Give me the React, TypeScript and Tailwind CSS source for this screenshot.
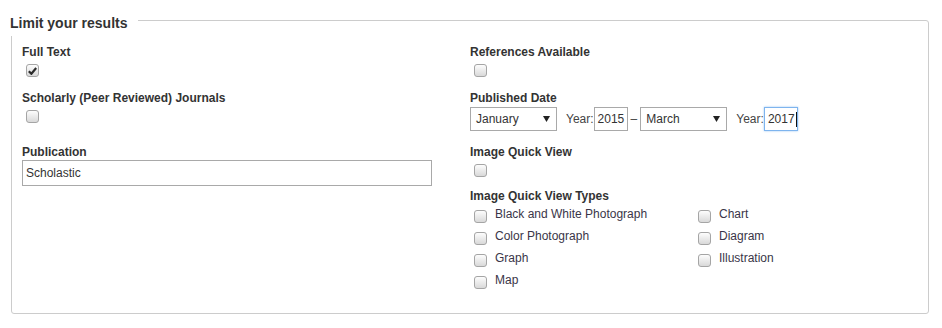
import React from 'react';

const imageTypes = [
  'Black and White Photograph',
  'Color Photograph',
  'Graph',
  'Map',
  'Chart',
  'Diagram',
  'Illustration',
];

function Checkbox({ checked = false, className = '' }: { checked?: boolean; className?: string }) {
  return (
    <span
      className={`flex h-[13px] w-[13px] shrink-0 items-center justify-center rounded-[3px] border border-[#a5a5a5] bg-linear-to-b from-[#fdfdfd] to-[#d9d9d9] ${className}`}
    >
      {checked && (
        <svg width="9" height="8" viewBox="0 0 9 8">
          <path d="M0.8 4.2 L3.4 6.8 L8.2 1" fill="none" stroke="#2b2b2b" strokeWidth="2.2" />
        </svg>
      )}
    </span>
  );
}

function FieldLabel({ children, className = '' }: { children: React.ReactNode; className?: string }) {
  return <div className={`text-[12px] font-bold leading-[17px] text-[#333] ${className}`}>{children}</div>;
}

function SelectBox({ value }: { value: string }) {
  return (
    <div className="flex h-[24px] w-[87px] items-center justify-between border border-[#a9a9a9] bg-white pl-[5px] pr-[6px] text-[12px] text-[#333]">
      <span>{value}</span>
      <svg width="7" height="6" viewBox="0 0 7 6">
        <polygon points="0,0 7,0 3.5,6" fill="#222" />
      </svg>
    </div>
  );
}

function YearBox({ value, focused = false }: { value: string; focused?: boolean }) {
  return (
    <div
      className={`flex h-[24px] w-[34px] items-center border pl-[3px] text-[12px] text-[#333] ${
        focused ? 'border-[#7eb4ee] shadow-[0_0_2px_#9cc6f3]' : 'border-[#a9a9a9]'
      }`}
    >
      <span>{value}</span>
      {focused && <span className="ml-[1px] h-[15px] w-px bg-[#111]" />}
    </div>
  );
}

export default function App() {
  return (
    <div className="h-[328px] w-[942px] bg-white pt-[4px] font-['Liberation_Sans',Arial,sans-serif] text-[#333]">
      <fieldset className="ml-[11px] w-[918px] rounded-[3px] border border-[#cccccc] p-0">
        <legend className="-ml-[2px] bg-white pt-[9px] pb-[3px] pr-[11px] text-[14px] font-bold leading-[20px] text-[#333]">
          Limit your results
        </legend>

        <div className="grid grid-cols-2 px-[10px] pt-[8px] pb-[22px]">
          {/* Left column */}
          <div>
            <FieldLabel>Full Text</FieldLabel>
            <Checkbox checked className="ml-[4px] mt-[3px]" />

            <FieldLabel className="mt-[13px]">Scholarly (Peer Reviewed) Journals</FieldLabel>
            <Checkbox className="ml-[4px] mt-[3px]" />

            <FieldLabel className="mt-[21px]">Publication</FieldLabel>
            <input
              readOnly
              value="Scholastic"
              className="-mt-[1px] block h-[26px] w-[410px] border border-[#a9a9a9] px-[3px] text-[12px] text-[#333] outline-none"
            />
          </div>

          {/* Right column */}
          <div>
            <FieldLabel>References Available</FieldLabel>
            <Checkbox className="ml-[4px] mt-[3px]" />

            <FieldLabel className="mt-[13px]">Published Date</FieldLabel>
            <div className="flex items-center text-[12px] text-[#444]">
              <SelectBox value="January" />
              <span className="ml-[9px]">Year:</span>
              <YearBox value="2015" />
              <span className="mx-[3px]">–</span>
              <SelectBox value="March" />
              <span className="ml-[9px]">Year:</span>
              <YearBox value="2017" focused />
            </div>

            <FieldLabel className="mt-[13px]">Image Quick View</FieldLabel>
            <Checkbox className="ml-[4px] mt-[3px]" />

            <div className="mt-[13px] text-[12px] font-bold leading-[13px] text-[#333]">Image Quick View Types</div>
            <div className="grid w-[448px] grid-flow-col grid-cols-2 grid-rows-4">
              {imageTypes.map((t) => (
                <div key={t} className="flex h-[22px] items-center">
                  <Checkbox className="ml-[4px] mr-[8px] mt-[4px]" />
                  <span className="text-[12px] leading-[22px] text-[#3a3548]">{t}</span>
                </div>
              ))}
            </div>
          </div>
        </div>
      </fieldset>
    </div>
  );
}
